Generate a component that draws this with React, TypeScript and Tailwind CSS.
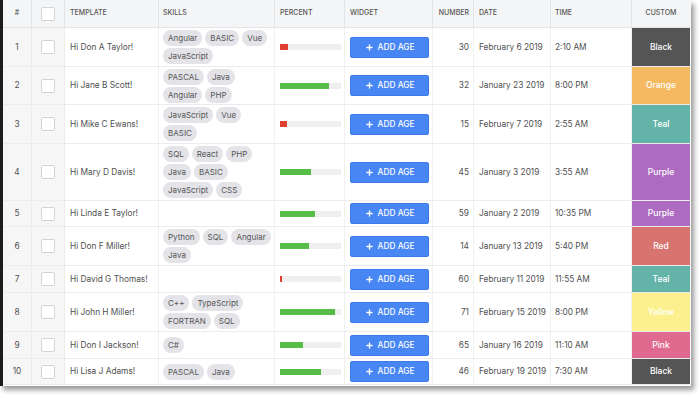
import { Plus } from 'lucide-react'

type Row = {
  id: number
  name: string
  skills: string[][]
  pct: number
  num: number
  date: string
  time: string
  color: string
  h: string
}

const rows: Row[] = [
  { id: 1, name: 'Hi Don A Taylor!', skills: [['Angular', 'BASIC', 'Vue'], ['JavaScript']], pct: 13, num: 30, date: 'February 6 2019', time: '2:10 AM', color: 'Black', h: 'h-[39px]' },
  { id: 2, name: 'Hi Jane B Scott!', skills: [['PASCAL', 'Java'], ['Angular', 'PHP']], pct: 81, num: 32, date: 'January 23 2019', time: '8:00 PM', color: 'Orange', h: 'h-[38px]' },
  { id: 3, name: 'Hi Mike C Ewans!', skills: [['JavaScript', 'Vue'], ['BASIC']], pct: 11, num: 15, date: 'February 7 2019', time: '2:55 AM', color: 'Teal', h: 'h-[39px]' },
  { id: 4, name: 'Hi Mary D Davis!', skills: [['SQL', 'React', 'PHP'], ['Java', 'BASIC'], ['JavaScript', 'CSS']], pct: 50, num: 45, date: 'January 3 2019', time: '3:55 AM', color: 'Purple', h: 'h-[57px]' },
  { id: 5, name: 'Hi Linda E Taylor!', skills: [], pct: 58, num: 59, date: 'January 2 2019', time: '10:35 PM', color: 'Purple', h: 'h-[26px]' },
  { id: 6, name: 'Hi Don F Miller!', skills: [['Python', 'SQL', 'Angular'], ['Java']], pct: 48, num: 14, date: 'January 13 2019', time: '5:40 PM', color: 'Red', h: 'h-[39px]' },
  { id: 7, name: 'Hi David G Thomas!', skills: [], pct: 4, num: 60, date: 'February 11 2019', time: '11:55 AM', color: 'Teal', h: 'h-[27px]' },
  { id: 8, name: 'Hi John H Miller!', skills: [['C++', 'TypeScript'], ['FORTRAN', 'SQL']], pct: 90, num: 71, date: 'February 15 2019', time: '8:00 PM', color: 'Yellow', h: 'h-[39px]' },
  { id: 9, name: 'Hi Don I Jackson!', skills: [['C#']], pct: 37, num: 65, date: 'January 16 2019', time: '11:10 AM', color: 'Pink', h: 'h-[27px]' },
  { id: 10, name: 'Hi Lisa J Adams!', skills: [['PASCAL', 'Java']], pct: 67, num: 46, date: 'February 19 2019', time: '7:30 AM', color: 'Black', h: 'h-[26px]' },
]

const colorBg: Record<string, string> = {
  Black: 'bg-[#555555]',
  Orange: 'bg-[#f5b962]',
  Teal: 'bg-[#64b3a8]',
  Purple: 'bg-[#ad6cc2]',
  Red: 'bg-[#d8746f]',
  Yellow: 'bg-[#fbf08d]',
  Pink: 'bg-[#e0698f]',
}

const cols = 'grid grid-cols-[29px_33px_94px_116px_70px_88px_41px_77px_81px_58px]'

function Checkbox() {
  return <div className="w-[14px] h-[14px] rounded-[2px] border border-[#d4d4d4] bg-white" />
}

export default function App() {
  return (
    <div className="w-[700px] h-[397px] bg-white overflow-hidden font-['Inter',sans-serif]">
      <div className="w-[691px] h-[386px] border-l-[3px] border-[#1c1c1c] bg-white overflow-hidden shadow-[3px_4px_5px_rgba(0,0,0,0.4)]">
        {/* Header */}
        <div className={`${cols} h-[28px] bg-[#f4f5f7] border-b border-[#e4e4e4] text-[7px] font-medium text-[#555] uppercase`}>
          <div className="flex items-center justify-center border-r border-[#e4e4e4]">#</div>
          <div className="flex items-center justify-center border-r border-[#e4e4e4]"><Checkbox /></div>
          <div className="flex items-center pl-[5px] border-r border-[#e4e4e4]">Template</div>
          <div className="flex items-center pl-[4px] border-r border-[#e4e4e4]">Skills</div>
          <div className="flex items-center pl-[5px] border-r border-[#e4e4e4]">Percent</div>
          <div className="flex items-center pl-[5px] border-r border-[#e4e4e4]">Widget</div>
          <div className="flex items-center justify-end pr-[4px] border-r border-[#e4e4e4]">Number</div>
          <div className="flex items-center pl-[5px] border-r border-[#e4e4e4]">Date</div>
          <div className="flex items-center pl-[4px] border-r border-[#e4e4e4]">Time</div>
          <div className="flex items-center justify-center">Custom</div>
        </div>

        {/* Rows */}
        {rows.map((r) => (
          <div key={r.id} className={`${cols} ${r.h} border-b border-[#ececec] text-[8.3px] text-[#505050]`}>
            <div className="flex items-center justify-center bg-[#f6f6f6] border-r border-[#ececec]">{r.id}</div>
            <div className="flex items-center justify-center bg-[#f6f6f6] border-r border-[#ececec]"><Checkbox /></div>
            <div className="flex items-center pl-[5px] border-r border-[#f0f0f0] whitespace-nowrap">{r.name}</div>
            <div className="flex flex-col justify-center gap-[2px] pl-[4px] border-r border-[#f0f0f0]">
              {r.skills.map((line, i) => (
                <div key={i} className="flex gap-[3px]">
                  {line.map((s) => (
                    <span key={s} className="h-[16px] px-[5px] flex items-center rounded-full bg-[#e3e3e8] text-[#555] text-[8px]">
                      {s}
                    </span>
                  ))}
                </div>
              ))}
            </div>
            <div className="flex items-center pl-[5px] pr-[3px] border-r border-[#f0f0f0]">
              <div className="w-[62px] h-[6px] bg-[#efefef]">
                <div className={`h-full ${r.pct < 20 ? 'bg-[#df3f2f]' : 'bg-[#56bd47]'}`} style={{ width: `${r.pct}%` }} />
              </div>
            </div>
            <div className="flex items-center pl-[5px] border-r border-[#f0f0f0]">
              <button className="w-[79px] h-[21px] rounded-[2px] bg-[#4786f3] border border-[#3d7be8] text-white text-[8.3px] font-medium flex items-center justify-center gap-[4px] uppercase">
                <Plus size={9} strokeWidth={3.5} />
                Add Age
              </button>
            </div>
            <div className="flex items-center justify-end pr-[4px] border-r border-[#f0f0f0]">{r.num}</div>
            <div className="flex items-center pl-[5px] border-r border-[#f0f0f0] whitespace-nowrap">{r.date}</div>
            <div className="flex items-center pl-[4px] border-r border-[#f0f0f0]">{r.time}</div>
            <div className={`flex items-center justify-center text-white text-[8.5px] font-medium ${colorBg[r.color]}`}>{r.color}</div>
          </div>
        ))}
      </div>
    </div>
  )
}
